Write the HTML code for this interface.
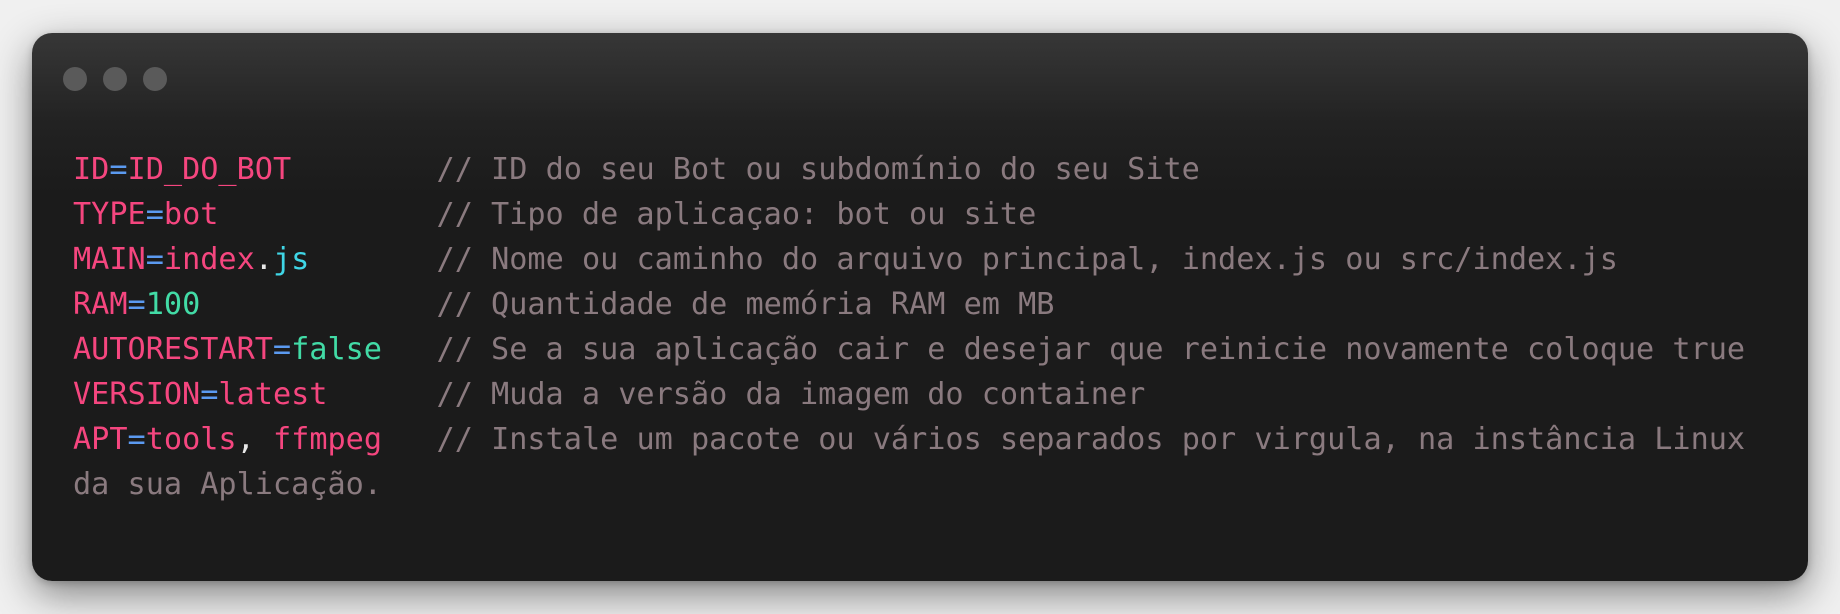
<!DOCTYPE html>
<html><head><meta charset="utf-8">
<style>
html,body{margin:0;padding:0;width:1840px;height:614px;overflow:hidden;background:#f0f0f0;}
.win{position:absolute;left:32px;top:33px;width:1776px;height:548px;border-radius:20px;
background:linear-gradient(180deg,#373737 0px,#222 90px,#1b1b1b 160px,#1b1b1b 100%);
box-shadow:0 14px 40px rgba(0,0,0,0.45),0 2px 8px rgba(0,0,0,0.2);}
.dot{position:absolute;top:34px;width:24px;height:24px;border-radius:50%;background:#5a5a5a;}
pre{position:absolute;left:41px;top:114px;margin:0;font-family:"DejaVu Sans Mono","Liberation Mono",monospace;
font-size:30.2px;line-height:45px;color:#8a7a7f;}
.k{color:#f5467f}.e{color:#5b9af0}.c{color:#3fd6e6}.g{color:#42dba6}.w{color:#e8e8e8}.m{color:#8a7a7f}
</style></head><body>
<div class="win">
<div class="dot" style="left:31px"></div>
<div class="dot" style="left:71px"></div>
<div class="dot" style="left:111px"></div>
<pre><span class="k">ID</span><span class="e">=</span><span class="k">ID_DO_BOT</span>        <span class="m">// ID do seu Bot ou subdomínio do seu Site</span>
<span class="k">TYPE</span><span class="e">=</span><span class="k">bot</span>            <span class="m">// Tipo de aplicaçao: bot ou site</span>
<span class="k">MAIN</span><span class="e">=</span><span class="k">index</span><span class="w">.</span><span class="c">js</span>       <span class="m">// Nome ou caminho do arquivo principal, index.js ou src/index.js</span>
<span class="k">RAM</span><span class="e">=</span><span class="g">100</span>             <span class="m">// Quantidade de memória RAM em MB</span>
<span class="k">AUTORESTART</span><span class="e">=</span><span class="g">false</span>   <span class="m">// Se a sua aplicação cair e desejar que reinicie novamente coloque true</span>
<span class="k">VERSION</span><span class="e">=</span><span class="k">latest</span>      <span class="m">// Muda a versão da imagem do container</span>
<span class="k">APT</span><span class="e">=</span><span class="k">tools</span><span class="w">,</span> <span class="k">ffmpeg</span>   <span class="m">// Instale um pacote ou vários separados por virgula, na instância Linux</span>
<span class="m">da sua Aplicação.</span></pre>
</div>
</body></html>
